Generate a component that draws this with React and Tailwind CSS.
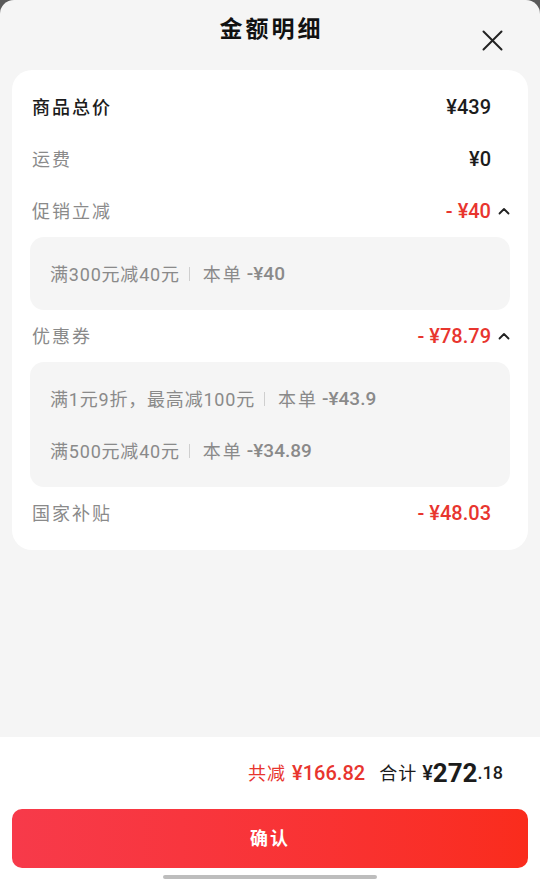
import React from "react";

const FONT = { fontFamily: '"Roboto","Noto Sans CJK SC",sans-serif' };

function Chevron() {
  return (
    <svg width="12" height="8" viewBox="0 0 12 8" className="ml-[7px]">
      <path d="M1.5 6.5 L6 2 L10.5 6.5" fill="none" stroke="#222" strokeWidth="1.8" strokeLinecap="round" strokeLinejoin="round" />
    </svg>
  );
}

function Row({ label, value, dark, red, chevron }) {
  return (
    <div className="h-[52px] flex items-center justify-between pl-[2px]">
      <span className={`text-[18px] tracking-[2px] ${dark ? "text-[#1c1c1c] font-medium" : "text-[#8a8a8a]"}`}>{label}</span>
      <div className="flex items-center">
        <span className={`text-[20px] font-medium ${red ? "text-[#e8352e]" : "text-[#1c1c1c]"}`}>{value}</span>
        <div className="w-[19px] flex justify-end">{chevron ? <Chevron /> : null}</div>
      </div>
    </div>
  );
}

function Sep() {
  return <span className="inline-block w-px h-[14px] bg-[#cfcfcf] ml-[9px] mr-[13px]" />;
}

function SubLine({ left, label, amount }) {
  return (
    <div className="h-[52px] flex items-center text-[18px] text-[#8a8a8a]">
      <span className="tracking-[0.8px]">{left}</span>
      <Sep />
      <span className="tracking-[2px]">{label}</span>
      <span className="ml-[4px] text-[19px] font-medium">{amount}</span>
    </div>
  );
}

export default function App() {
  return (
    <div className="w-[540px] h-[880px] bg-[#5a5a5a]" style={FONT}>
      <div className="h-full bg-[#f5f5f5] rounded-t-[14px] flex flex-col overflow-hidden">
        <div className="relative h-[70px]">
          <div className="text-center pt-[13px] pl-[3px] text-[23px] font-bold text-[#111] tracking-[3px]">金额明细</div>
          <svg className="absolute left-[482px] top-[30px]" width="21" height="21" viewBox="0 0 21 21">
            <path d="M1.5 1.5 L19.5 19.5 M19.5 1.5 L1.5 19.5" stroke="#222" strokeWidth="2" strokeLinecap="round" />
          </svg>
        </div>
        <div className="mx-[12px] bg-white rounded-[20px] px-[18px] pt-[11px] pb-[11px]">
          <Row label="商品总价" value="¥439" dark />
          <Row label="运费" value="¥0" />
          <Row label="促销立减" value="- ¥40" red chevron />
          <div className="bg-[#f5f5f5] rounded-[14px] px-[20px] pt-[11px] pb-[10px]">
            <SubLine left="满300元减40元" label="本单" amount="-¥40" />
          </div>
          <Row label="优惠券" value="- ¥78.79" red chevron />
          <div className="bg-[#f5f5f5] rounded-[14px] px-[20px] pt-[11px] pb-[10px]">
            <SubLine left="满1元9折，最高减100元" label="本单" amount="-¥43.9" />
            <SubLine left="满500元减40元" label="本单" amount="-¥34.89" />
          </div>
          <Row label="国家补贴" value="- ¥48.03" red />
        </div>
        <div className="flex-1" />
        <div className="bg-white h-[143px] flex flex-col">
          <div className="h-[72px] flex items-center justify-end pr-[37px]">
            <span className="text-[18px] text-[#e8352e] mr-[6px] tracking-[1px]">共减</span>
            <span className="text-[20px] font-medium text-[#e8352e] mr-[14px]">¥166.82</span>
            <span className="text-[18px] text-[#1c1c1c] mr-[5px] tracking-[1px]">合计</span>
            <span className="text-[20px] font-medium text-[#1c1c1c]">¥</span>
            <span className="text-[26px] font-bold text-[#1c1c1c]">272</span>
            <span className="text-[18px] font-medium text-[#1c1c1c] self-end mb-[23px]">.18</span>
          </div>
          <button className="mx-[12px] h-[59px] rounded-[10px] bg-gradient-to-r from-[#f73a4a] to-[#fa2c1c] text-white text-[18px] font-bold tracking-[2px]">确认</button>
          <div className="mt-[7px] mx-auto w-[214px] h-[4px] rounded-full bg-[#bdbdbd]" />
        </div>
      </div>
    </div>
  );
}
